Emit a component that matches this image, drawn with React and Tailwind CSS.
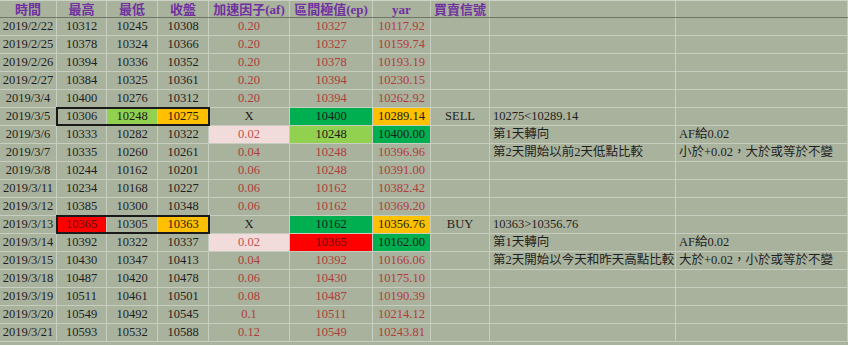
import React from 'react';

const widths = ['w-[57px]', 'w-[50px]', 'w-[51px]', 'w-[51px]', 'w-[81px]', 'w-[83px]', 'w-[58px]', 'w-[59px]', 'w-[186px]', 'w-[172px]'];

const headers = ['時間', '最高', '最低', '收盤', '加速因子(af)', '區間極值(ep)', 'yar', '買賣信號', '', ''];

const rows = [
  ['2019/2/22', '10312', '10245', '10308', '0.20', '10327', '10117.92'],
  ['2019/2/25', '10378', '10324', '10366', '0.20', '10327', '10159.74'],
  ['2019/2/26', '10394', '10336', '10352', '0.20', '10378', '10193.19'],
  ['2019/2/27', '10384', '10325', '10361', '0.20', '10394', '10230.15'],
  ['2019/3/4', '10400', '10276', '10312', '0.20', '10394', '10262.92'],
  ['2019/3/5', '10306', '10248', '10275', 'X', '10400', '10289.14', 'SELL', '10275<10289.14', ''],
  ['2019/3/6', '10333', '10282', '10322', '0.02', '10248', '10400.00', '', '第1天轉向', 'AF給0.02'],
  ['2019/3/7', '10335', '10260', '10261', '0.04', '10248', '10396.96', '', '第2天開始以前2天低點比較', '小於+0.02，大於或等於不變'],
  ['2019/3/8', '10244', '10162', '10201', '0.06', '10248', '10391.00'],
  ['2019/3/11', '10234', '10168', '10227', '0.06', '10162', '10382.42'],
  ['2019/3/12', '10385', '10300', '10348', '0.06', '10162', '10369.20'],
  ['2019/3/13', '10365', '10305', '10363', 'X', '10162', '10356.76', 'BUY', '10363>10356.76', ''],
  ['2019/3/14', '10392', '10322', '10337', '0.02', '10365', '10162.00', '', '第1天轉向', 'AF給0.02'],
  ['2019/3/15', '10430', '10347', '10413', '0.04', '10392', '10166.06', '', '第2天開始以今天和昨天高點比較', '大於+0.02，小於或等於不變'],
  ['2019/3/18', '10487', '10420', '10478', '0.06', '10430', '10175.10'],
  ['2019/3/19', '10511', '10461', '10501', '0.08', '10487', '10190.39'],
  ['2019/3/20', '10549', '10492', '10545', '0.1', '10511', '10214.12'],
  ['2019/3/21', '10593', '10532', '10588', '0.12', '10549', '10243.81'],
];

// highlighted cells, keyed by row-col
const fills = {
  '5-2': 'bg-[#92d050] text-[#1a1a1a]',
  '5-3': 'bg-[#ffc000] text-[#1a1a1a]',
  '5-4': 'text-[#1a1a1a]',
  '5-5': 'bg-[#00b050] text-[#1a1a1a]',
  '5-6': 'bg-[#ffc000] text-[#1a1a1a]',
  '6-4': 'bg-[#f2dcdb] text-[#c0504d]',
  '6-5': 'bg-[#92d050] text-[#1a1a1a]',
  '6-6': 'bg-[#00b050] text-[#1a1a1a]',
  '11-1': 'bg-[#ff0000] text-[#5c0a0a]',
  '11-3': 'bg-[#ffc000] text-[#1a1a1a]',
  '11-4': 'text-[#1a1a1a]',
  '11-5': 'bg-[#00b050] text-[#1a1a1a]',
  '11-6': 'bg-[#ffc000] text-[#1a1a1a]',
  '12-4': 'bg-[#f2dcdb] text-[#c0504d]',
  '12-5': 'bg-[#ff0000] text-[#5c0a0a]',
  '12-6': 'bg-[#00b050] text-[#1a1a1a]',
};

const Cell = ({ r, c, value }) => {
  const base = c >= 4 && c <= 6 ? 'text-[#b23b3b]' : 'text-[#1f1f1f]';
  const fill = fills[`${r}-${c}`] || base;
  const align = c >= 8 ? 'justify-start pl-[3px]' : 'justify-center';
  return (
    <div className={`${widths[c]} h-full shrink-0 flex items-center ${align} border-r border-[#c7cdbf] whitespace-nowrap ${fill}`}>
      {value}
    </div>
  );
};

const App = () => {
  return (
    <div
      className="w-[848px] h-[345px] overflow-hidden bg-[#a9b29d] text-[12.5px] leading-none"
      style={{ fontFamily: '"Liberation Serif", "Noto Sans CJK TC", serif' }}
    >
      <div className="flex h-[18px] border-t border-b border-t-[#cdd2c7] border-b-[#6f7665]">
        {headers.map((h, c) => (
          <div
            key={c}
            className={`${widths[c]} h-full shrink-0 flex items-center justify-center border-r border-[#c7cdbf] text-[13px] font-bold text-[#7030a0] whitespace-nowrap`}
          >
            {h}
          </div>
        ))}
      </div>
      {rows.map((row, r) => {
        const cells = Array.from({ length: 10 }, (_, c) => row[c] || '');
        const boxed = r === 5 || r === 11;
        return (
          <div key={r} className="flex h-[18px] border-b border-[#c7cdbf]">
            <Cell r={r} c={0} value={cells[0]} />
            {boxed ? (
              <div className="flex h-full shrink-0 outline-2 outline-[#1a1a1a] -outline-offset-1">
                {[1, 2, 3].map((c) => (
                  <Cell key={c} r={r} c={c} value={cells[c]} />
                ))}
              </div>
            ) : (
              [1, 2, 3].map((c) => <Cell key={c} r={r} c={c} value={cells[c]} />)
            )}
            {[4, 5, 6, 7, 8, 9].map((c) => (
              <Cell key={c} r={r} c={c} value={cells[c]} />
            ))}
          </div>
        );
      })}
    </div>
  );
};

export default App;
